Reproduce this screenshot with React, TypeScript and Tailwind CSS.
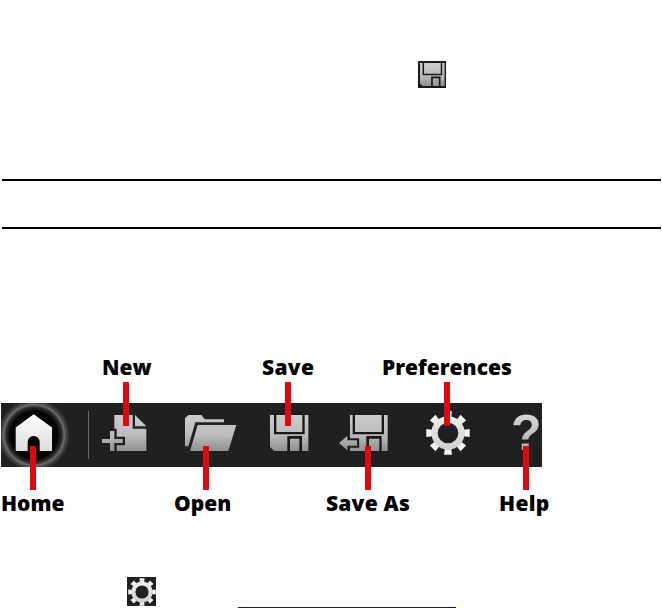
import type { ReactNode } from 'react';

const TOOTH_ANGLES = [0, 45, 90, 135, 180, 225, 270, 315];

function Metal({ id }: { id: string }) {
  return (
    <defs>
      <linearGradient id={id} x1="0" y1="0" x2="0" y2="114" gradientUnits="userSpaceOnUse">
        <stop offset="0" stopColor="#cdcdcd" />
        <stop offset="0.55" stopColor="#bcbcbc" />
        <stop offset="1" stopColor="#8d8d8d" />
      </linearGradient>
    </defs>
  );
}

function HomeIcon() {
  return (
    <svg viewBox="0 0 68 64" className="h-16 w-[68px] shrink-0">
      <defs>
        <radialGradient id="halo" cx="33" cy="32" r="36" gradientUnits="userSpaceOnUse">
          <stop offset="0" stopColor="#000" />
          <stop offset="0.66" stopColor="#050505" />
          <stop offset="0.78" stopColor="#303032" />
          <stop offset="0.84" stopColor="#6c6c6f" />
          <stop offset="0.89" stopColor="#4a4a4c" />
          <stop offset="1" stopColor="#202022" />
        </radialGradient>
        <linearGradient id="house" x1="0" y1="0" x2="0" y2="1">
          <stop offset="0" stopColor="#fff" />
          <stop offset="1" stopColor="#dcdcdc" />
        </linearGradient>
      </defs>
      <circle cx="33" cy="32" r="36" fill="url(#halo)" />
      <path d="M32.7 11.3 51 24.6V48H38.7V39a6 6 0 0 0-12 0v9H14.7V24.6z" fill="url(#house)" />
    </svg>
  );
}

function NewIcon() {
  return (
    <svg viewBox="0 0 135 114" className="h-[38px] w-[45px] shrink-0 overflow-visible">
      <Metal id="metal-new" />
      <path d="M37 3H92V44H133V111H37z" fill="url(#metal-new)" />
      <path d="M99 3 133 37H99z" fill="url(#metal-new)" />
      <path d="M24 51H37V75H62V87H37V111H24V87H0V75H24z" fill="none" stroke="#202022" strokeWidth="14" />
      <path d="M24 51H37V75H62V87H37V111H24V87H0V75H24z" fill="url(#metal-new)" />
    </svg>
  );
}

function OpenIcon() {
  return (
    <svg viewBox="0 0 156 114" className="h-[38px] w-[52px] shrink-0">
      <Metal id="metal-open" />
      <path d="M10 3H49L59 16H117V25H31L10 97H0V13z" fill="url(#metal-open)" />
      <path d="M38 33H154L130 111H15z" fill="url(#metal-open)" />
    </svg>
  );
}

function SaveIcon({ id, className }: { id: string; className: string }) {
  return (
    <svg viewBox="0 0 117 114" className={className}>
      <Metal id={id} />
      <path d="M0 3H115V111H12L0 99z" fill={`url(#${id})`} />
      <path d="M12 0H104V61H12zM52 66H96V114H52z" fill="#19191a" />
      <path d="M19 3H97V54H19zM60 74H88V111H60z" fill={`url(#${id})`} />
    </svg>
  );
}

function SaveAsIcon() {
  return (
    <svg viewBox="0 0 147 114" className="h-[38px] w-[49px] shrink-0">
      <Metal id="metal-save-as" />
      <path d="M33 3H146V111H33z" fill="url(#metal-save-as)" />
      <path d="M41 0H135V61H41zM82 66H128V114H82z" fill="#19191a" />
      <path d="M48 3H128V54H48zM90 74H121V111H90z" fill="url(#metal-save-as)" />
      <path d="M0 87 25 66V79H54V95H25V109z" fill="none" stroke="#202022" strokeWidth="13" />
      <path d="M0 87 25 66V79H54V95H25V109z" fill="url(#metal-save-as)" />
    </svg>
  );
}

function GearIcon({ id, className }: { id: string; className: string }) {
  return (
    <svg viewBox="-66 -66 132 132" className={className}>
      <defs>
        <linearGradient id={id} x1="0" y1="-66" x2="0" y2="66" gradientUnits="userSpaceOnUse">
          <stop offset="0" stopColor="#f4f4f4" />
          <stop offset="1" stopColor="#c8c8c8" />
        </linearGradient>
      </defs>
      <g fill={`url(#${id})`}>
        {TOOTH_ANGLES.map((angle) => (
          <path key={angle} d="M-9-42-12-65H12L9-42z" transform={`rotate(${angle})`} />
        ))}
      </g>
      <circle r="40.5" fill="none" stroke={`url(#${id})`} strokeWidth="19" />
    </svg>
  );
}

function Label({ className, children }: { className: string; children: ReactNode }) {
  return <span className={`shrink-0 whitespace-nowrap ${className}`}>{children}</span>;
}

// Red leader lines run over the toolbar, from each label to its icon.
function Leaders() {
  return (
    <>
      <i className="absolute left-[123px] top-[30px] h-11 w-1.5 bg-[#df080d]" />
      <i className="absolute left-[285px] top-[30px] h-11 w-1.5 bg-[#df080d]" />
      <i className="absolute left-[444px] top-[30px] h-11 w-1.5 bg-[#df080d]" />
      <i className="absolute left-[30px] top-[94px] h-11 w-1.5 bg-[#df080d]" />
      <i className="absolute left-[203px] top-[94px] h-11 w-1.5 bg-[#df080d]" />
      <i className="absolute left-[365px] top-[94px] h-11 w-1.5 bg-[#df080d]" />
      <i className="absolute left-[523px] top-[94px] h-11 w-1.5 bg-[#df080d]" />
    </>
  );
}

export default function App() {
  return (
    <main className="flex h-[608px] w-[662px] flex-col overflow-hidden bg-white font-['Open_Sans',sans-serif] text-black">
      <div className="ml-[418px] mt-[61px] flex h-[27px] w-7 shrink-0 items-center justify-center bg-[#19191a]">
        <SaveIcon id="metal-inline" className="h-[25px] w-[25px]" />
      </div>

      <div className="ml-0.5 mr-px mt-[91px] h-[50px] shrink-0 border-y-2 border-black" />

      <section className="relative mt-[123px] h-[168px] shrink-0 text-[21px] font-extrabold leading-[30px]">
        <div className="flex h-[51px]">
          <Label className="ml-[102px] w-[160px]">New</Label>
          <Label className="w-[120px] tracking-[0.3px]">Save</Label>
          <Label className="">Preferences</Label>
        </div>

        <div className="ml-px flex h-16 w-[541px] items-center bg-[#202022]">
          <HomeIcon />
          <div className="ml-[19px] h-12 w-px shrink-0 bg-[#6a6a6c]" />
          <div className="ml-[13px] flex shrink-0 items-center pb-1">
            <NewIcon />
            <div className="ml-[38px] flex"><OpenIcon /></div>
            <div className="ml-[33px] flex"><SaveIcon id="metal-save" className="h-[38px] w-[39px]" /></div>
            <div className="ml-[30px] flex"><SaveAsIcon /></div>
            <div className="ml-[38px] flex"><GearIcon id="gear-bar" className="h-11 w-11" /></div>
          </div>
          <span className="ml-[41px] h-16 shrink-0 bg-linear-to-b from-[#e0e0e0] to-[#a0a0a0] bg-clip-text font-['Liberation_Sans',sans-serif] text-[50px] font-bold leading-[60px] text-transparent">
            ?
          </span>
        </div>

        <div className="flex pt-[21px]">
          <Label className="ml-px w-[173px]">Home</Label>
          <Label className="w-[152px]">Open</Label>
          <Label className="w-[173px] tracking-[0.2px]">Save As</Label>
          <Label className="tracking-[0.3px]">Help</Label>
        </div>
        <Leaders />
      </section>

      <div className="mt-[57px] flex h-[31px] shrink-0 items-end">
        <div className="mb-0.5 ml-[127px] flex h-[29px] w-[29px] items-center justify-center bg-[#202022]">
          <GearIcon id="gear-inline" className="h-7 w-7" />
        </div>
        <div className="ml-[82px] h-px w-[218px] bg-[#0000ee]" />
      </div>
    </main>
  );
}
